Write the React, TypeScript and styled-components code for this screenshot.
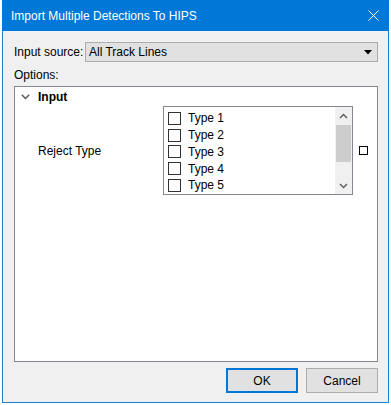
import styled, { createGlobalStyle } from 'styled-components';

const GlobalStyle = createGlobalStyle`
  html, body {
    margin: 0;
    padding: 0;
    background: #ffffff;
  }
  body {
    font-family: "Liberation Sans", Arial, sans-serif;
    font-size: 12px;
    color: #000;
  }
`;

const types = ['Type 1', 'Type 2', 'Type 3', 'Type 4', 'Type 5'];

export default function App() {
  return (
    <>
      <GlobalStyle />
      <Window>
        <TitleBar>
          <Title>Import Multiple Detections To HIPS</Title>
          <CloseIcon width='11' height='11' viewBox='0 0 11 11'>
            <path d='M0.5 0.5 L10.5 10.5 M10.5 0.5 L0.5 10.5' stroke='#fff' strokeWidth='1' fill='none' />
          </CloseIcon>
        </TitleBar>
        <Body>
          <SourceRow>
            <Label>Input source:</Label>
            <Combo>
              <span>All Track Lines</span>
              <svg width='8' height='5' viewBox='0 0 8 5'>
                <path d='M0 0 L8 0 L4 4.5 Z' fill='#000' />
              </svg>
            </Combo>
          </SourceRow>
          <OptionsLabel>Options:</OptionsLabel>
          <Panel>
            <CategoryRow>
              <svg width='9' height='6' viewBox='0 0 9 6'>
                <path d='M0.8 0.8 L4.5 4.5 L8.2 0.8' stroke='#555' strokeWidth='1.4' fill='none' />
              </svg>
              <CategoryName>Input</CategoryName>
            </CategoryRow>
            <PropertyRow>
              <PropertyName>Reject Type</PropertyName>
              <ListBox>
                <Items>
                  {types.map((t) => (
                    <Item key={t}>
                      <Check />
                      {t}
                    </Item>
                  ))}
                </Items>
                <ScrollBar>
                  <ScrollArrow>
                    <svg width='9' height='6' viewBox='0 0 9 6'>
                      <path d='M1 5 L4.5 1.5 L8 5' stroke='#606060' strokeWidth='1.5' fill='none' />
                    </svg>
                  </ScrollArrow>
                  <Track>
                    <Thumb />
                  </Track>
                  <ScrollArrow>
                    <svg width='9' height='6' viewBox='0 0 9 6'>
                      <path d='M1 1 L4.5 4.5 L8 1' stroke='#606060' strokeWidth='1.5' fill='none' />
                    </svg>
                  </ScrollArrow>
                </ScrollBar>
              </ListBox>
              <SmallBox />
            </PropertyRow>
          </Panel>
          <Buttons>
            <Button $primary>OK</Button>
            <Button>Cancel</Button>
          </Buttons>
        </Body>
      </Window>
    </>
  );
}

const Window = styled.div`
  box-sizing: border-box;
  margin-left: 2px;
  width: 387px;
  height: 403px;
  border: 1px solid #1883d7;
  border-top: none;
  display: flex;
  flex-direction: column;
  background: #f0f0f0;
`;

const TitleBar = styled.div`
  height: 31px;
  background: #0078d7;
  display: flex;
  align-items: center;
  justify-content: space-between;
  padding: 0 9px 0 9px;
  margin: 0 -1px;
  flex-shrink: 0;
`;

const Title = styled.span`
  color: #fff;
  font-size: 12px;
  padding-top: 1px;
`;

const CloseIcon = styled.svg`
  display: block;
  margin-right: 1px;
`;

const Body = styled.div`
  flex: 1;
  display: flex;
  flex-direction: column;
  padding: 11px 9px 9px 11px;
`;

const SourceRow = styled.div`
  display: flex;
  align-items: center;
  height: 20px;
`;

const Label = styled.span`
  width: 71px;
  flex-shrink: 0;
`;

const Combo = styled.div`
  box-sizing: border-box;
  width: 293px;
  height: 20px;
  border: 1px solid #adadad;
  background: #e1e1e1;
  display: flex;
  align-items: center;
  justify-content: space-between;
  padding: 0 5px 0 3px;
`;

const OptionsLabel = styled.div`
  margin-top: 5px;
  height: 17px;
  line-height: 17px;
`;

const Panel = styled.div`
  box-sizing: border-box;
  margin-top: 2px;
  width: 364px;
  height: 276px;
  border: 1px solid #828790;
  background: #fff;
`;

const CategoryRow = styled.div`
  display: flex;
  align-items: center;
  height: 19px;
  padding-left: 6px;
  svg {
    display: block;
  }
`;

const CategoryName = styled.span`
  font-weight: bold;
  margin-left: 8px;
`;

const PropertyRow = styled.div`
  display: flex;
  align-items: center;
  padding-left: 23px;
`;

const PropertyName = styled.span`
  width: 125px;
  flex-shrink: 0;
`;

const ListBox = styled.div`
  box-sizing: border-box;
  width: 190px;
  height: 89px;
  border: 1px solid #828790;
  display: flex;
  overflow: hidden;
`;

const Items = styled.div`
  flex: 1;
  padding: 3px 0 0 4px;
`;

const Item = styled.div`
  display: flex;
  align-items: center;
  height: 16.75px;
  gap: 7px;
`;

const Check = styled.span`
  box-sizing: border-box;
  width: 13px;
  height: 13px;
  border: 1px solid #333;
  background: #fff;
`;

const ScrollBar = styled.div`
  width: 17px;
  background: #f0f0f0;
  display: flex;
  flex-direction: column;
`;

const ScrollArrow = styled.div`
  height: 17px;
  display: flex;
  align-items: center;
  justify-content: center;
`;

const Track = styled.div`
  flex: 1;
`;

const Thumb = styled.div`
  margin: 1px 1px 0 1px;
  height: 37px;
  background: #cdcdcd;
`;

const SmallBox = styled.span`
  box-sizing: border-box;
  margin-left: 6px;
  width: 9px;
  height: 9px;
  border: 1px solid #000;
`;

const Buttons = styled.div`
  display: flex;
  justify-content: flex-end;
  gap: 8px;
  margin-top: 6px;
  padding-right: 1px;
`;

const Button = styled.button<{ $primary?: boolean }>`
  box-sizing: border-box;
  width: 72px;
  height: 25px;
  font-family: "Liberation Sans", Arial, sans-serif;
  font-size: 12px;
  color: #000;
  background: #e1e1e1;
  border: ${(p) => (p.$primary ? '2px solid #0078d7' : '1px solid #adadad')};
  padding: 0;
`;
